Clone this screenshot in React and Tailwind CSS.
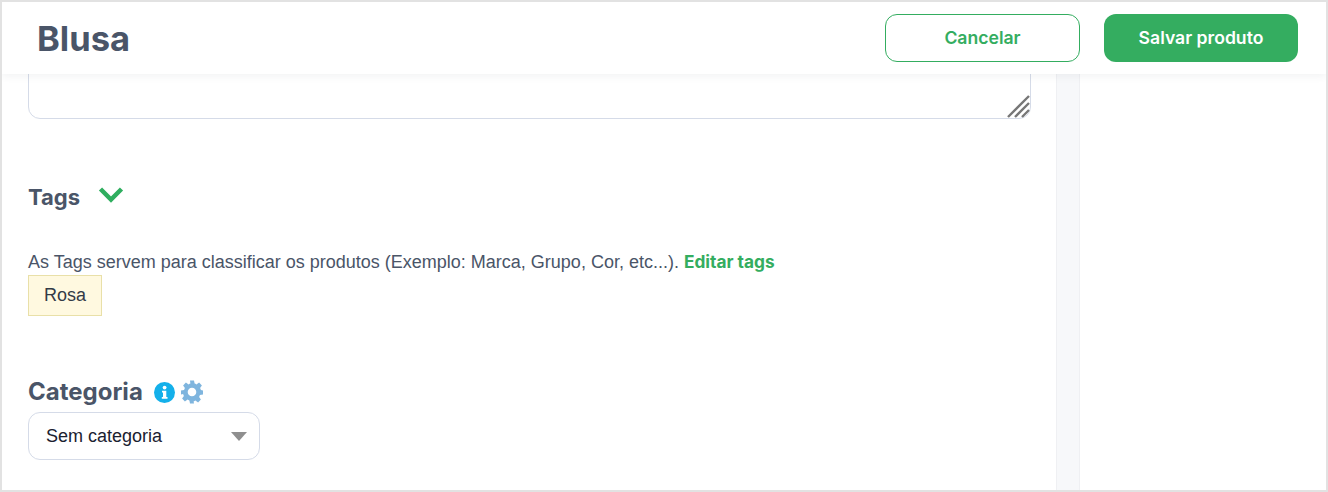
const headingFont = "font-['Inter',sans-serif]"
const bodyFont = "font-['Liberation_Sans',Arial,sans-serif]"

function InfoIcon() {
  return (
    <svg width="21" height="21" viewBox="0 0 21 21">
      <circle cx="10.5" cy="10.5" r="10.5" fill="#14b0ea" />
      <circle cx="10.6" cy="5.6" r="1.9" fill="#fff" />
      <path d="M8 8.7h4.3v6.2h1.2v1.9H7.800v-1.900h1.200v-4.300H8z" fill="#fff" />
    </svg>
  )
}

function GearIcon() {
  return (
    <svg width="24" height="24" viewBox="0 0 24 24" fill="#7fb5de">
      <path fillRule="evenodd" d="M10 1h4l.6 3.100c.6.2 1.200.5 1.800.8l2.700-1.800 2.800 2.800-1.800 2.700c.3.600.6 1.200.8 1.800L23 11v4l-3.100.6c-.2.600-.5 1.200-.8 1.800l1.800 2.700-2.800 2.800-2.700-1.800c-.6.3-1.200.6-1.800.8L14 24h-4l-.6-3.100c-.6-.2-1.200-.5-1.800-.8l-2.700 1.800-2.800-2.800 1.800-2.700c-.3-.6-.6-1.200-.8-1.800L1 15v-4l3.100-.6c.2-.6.5-1.200.8-1.800L3.100 5.900l2.800-2.800 2.700 1.800c.6-.3 1.200-.6 1.800-.8zM12 8.200a4.300 4.300 0 1 0 0 8.600 4.300 4.300 0 0 0 0-8.600z" transform="translate(0 -.5)" />
    </svg>
  )
}

export default function App() {
  return (
    <div className={`h-[492px] w-[1328px] overflow-hidden border-2 border-[#e2e2e2] bg-white flex flex-col ${bodyFont}`}>
      {/* top bar */}
      <header className="relative z-10 h-[72px] shrink-0 bg-white flex items-center justify-between pl-[35px] pr-[28px] shadow-[0_2px_8px_rgba(60,70,90,0.07)]">
        <h1 className={`pt-[2px] text-[34.5px] font-bold text-[#4a5568] ${headingFont}`}>Blusa</h1>
        <div className="flex gap-[24px]">
          <button className={`w-[195px] h-[48px] rounded-[12px] border border-[#34ad60] bg-white text-[17.6px] font-semibold text-[#34ad60] ${headingFont}`}>Cancelar</button>
          <button className={`w-[194px] h-[48px] rounded-[12px] bg-[#34ad60] text-[17.6px] font-semibold text-white ${headingFont}`}>Salvar produto</button>
        </div>
      </header>

      <div className="flex flex-1 min-h-0">
        <main className="w-[1054px] shrink-0 pl-[26px] pr-[25px]">
          <div className="relative w-[1003px] h-[60px] -mt-[15px]">
            <textarea className="block w-full h-full rounded-[12px] border border-[#d5dbe8] bg-white outline-none resize-none" />
            <svg width="23" height="23" viewBox="0 0 23 23" className="absolute right-[1px] bottom-[1px]">
              <path d="M1 22 22 1M8 22 22 8M15 22l7-7" stroke="#777" strokeWidth="2.400" fill="none" />
            </svg>
          </div>

          <div className="mt-[57px] flex items-center gap-[18px] h-[42px]">
            <h2 className={`text-[22px] font-bold leading-none text-[#4a5568] ${headingFont}`}>Tags</h2>
            <svg width="26" height="18" viewBox="0 0 26 18" className="-mt-[5px]">
              <path d="M2.500 3 13 13.500 23.500 3" fill="none" stroke="#2fae5f" strokeWidth="4.500" />
            </svg>
          </div>

          <p className="mt-[34px] text-[18px] leading-[20px] text-[#4a5568]">
            As Tags servem para classificar os produtos (Exemplo: Marca, Grupo, Cor, etc...).{' '}
            <a className={`text-[17.3px] font-bold text-[#34ad60] ${headingFont}`}>Editar tags</a>
          </p>
          <div className="mt-[3px] flex h-[41px] w-[74px] items-center justify-center border border-[#e9e0a8] bg-[#fff9e0] text-[18px] text-[#333b47]">Rosa</div>

          <div className="mt-[60px] flex items-center h-[32px]">
            <h2 className={`text-[24px] font-bold leading-none text-[#4a5568] ${headingFont}`}>Categoria</h2>
            <span className="ml-[11px] flex items-center gap-[5px]"><InfoIcon /><GearIcon /></span>
          </div>
          <div className="mt-[4px] flex h-[48px] w-[232px] items-center justify-between rounded-[12px] border border-[#d5dbe8] pl-[17px] pr-[12px] text-[18px] text-[#1a2130]">
            Sem categoria
            <svg width="16" height="9" viewBox="0 0 16 9"><path d="M0 0h16L8 9z" fill="#8f8f8f" /></svg>
          </div>
        </main>
        <div className="w-[24px] shrink-0 bg-[#f7f8fa] border-x border-[#eff0f3]" />
        <aside className="flex-1 bg-white" />
      </div>
    </div>
  )
}
